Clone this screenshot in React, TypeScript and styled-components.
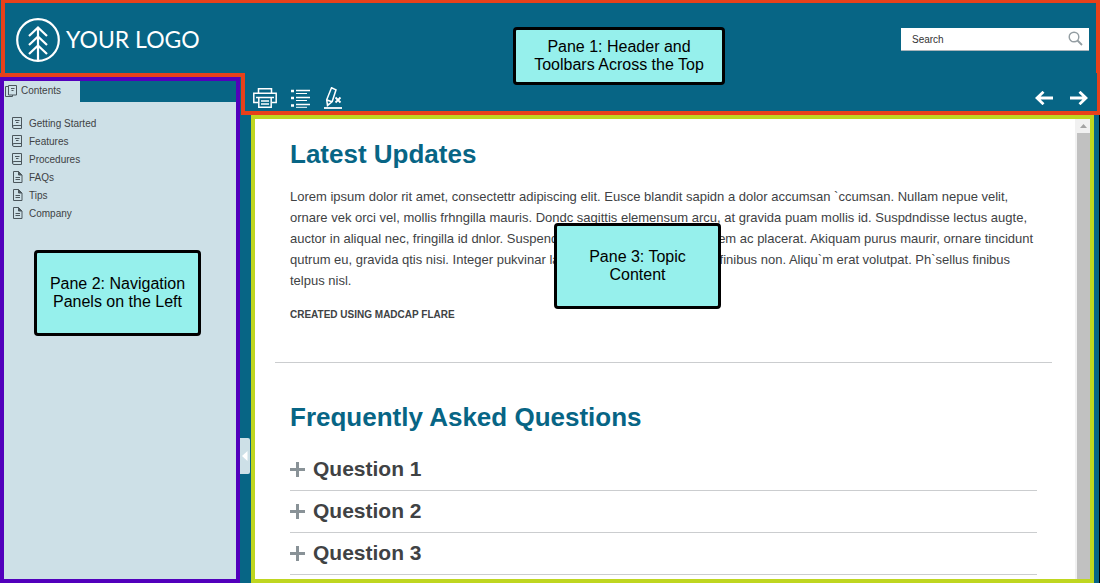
import React from 'react';
import styled, { createGlobalStyle } from 'styled-components';

const c = {
  teal: '#076585',
  pale: '#cde0e7',
  orange: '#e8411a',
  purple: '#5200bc',
  green: '#bfd620',
  callout: '#96f0ec',
  text: '#404244',
};

const GlobalStyle = createGlobalStyle`
  * { box-sizing: border-box; }
  body { margin: 0; background: #000; font-family: "Liberation Sans", Arial, sans-serif; color: ${c.text}; }
  button { font: inherit; color: inherit; border: 0; padding: 0; background: none; cursor: pointer; }
`;

const Page = styled.div`
  display: flex;
  flex-direction: column;
  height: 100vh;
  background: ${c.teal};
`;

const Header = styled.header`
  position: relative;
  display: flex;
  align-items: center;
  justify-content: space-between;
  flex: 0 0 73px;
  margin-left: 1px;
  padding: 0 7px 0 11px;
  border: solid ${c.orange};
  border-width: 3px 4px 0;
`;

const Logo = styled.a`
  display: flex;
  align-items: center;
  gap: 6px;
  padding-top: 4px;
  color: #fff;
  font-family: Lato, sans-serif;
  font-size: 23px;
  line-height: 42px;
  text-decoration: none;
`;

const LogoText = styled.span`
  padding-bottom: 2px;
`;

const SearchBox = styled.form`
  display: flex;
  align-items: center;
  width: 188px;
  height: 23px;
  padding: 0 6px 0 11px;
  background: #fff;
  border-bottom: 1px solid #a9b5bb;
  margin-top: 2px;
`;

const SearchInput = styled.input`
  flex: 1;
  min-width: 0;
  padding: 2px 0 0;
  border: 0;
  outline: 0;
  background: none;
  font: 10px "Liberation Sans", Arial, sans-serif;
  color: #333;
  &::placeholder { color: #333; opacity: 1; }
`;

const IconButton = styled.button`
  display: flex;
`;

const Body = styled.div`
  display: flex;
  flex: 1;
  min-height: 0;
`;

const Side = styled.div`
  position: relative;
  display: flex;
  flex-direction: column;
  flex: 0 0 241px;
  padding-right: 1px;
  border-top: 4px solid ${c.orange};
`;

const Navigation = styled.aside`
  display: flex;
  flex-direction: column;
  flex: 1;
  border: 4px solid ${c.purple};
`;

const Tab = styled.button`
  display: flex;
  align-items: center;
  align-self: flex-start;
  gap: 4px;
  width: 76px;
  height: 21px;
  padding: 0 0 2px 1px;
  background: ${c.pale};
  font-size: 10px;
`;

const NavList = styled.ul`
  flex: 1;
  margin: 0;
  padding: 12px 8px;
  list-style: none;
  background: ${c.pale};
`;

const NavLink = styled.a`
  display: flex;
  align-items: center;
  gap: 6px;
  height: 18px;
  font-size: 10px;
  color: ${c.text};
  text-decoration: none;
`;

const Handle = styled.button`
  position: absolute;
  left: 240px;
  top: 361px;
  display: flex;
  align-items: center;
  justify-content: center;
  width: 10px;
  height: 36px;
  background: ${c.pale};
  border-radius: 0 2px 2px 0;
`;

const Main = styled.div`
  display: flex;
  flex-direction: column;
  flex: 1;
  min-width: 0;
`;

const Toolbar = styled.div`
  display: flex;
  align-items: center;
  justify-content: space-between;
  flex: 0 0 42px;
  padding: 12px 9px 0 8px;
  border: solid ${c.orange};
  border-width: 0 3px 4px 4px;
`;

const ToolGroup = styled.div<{ $gap: number }>`
  display: flex;
  align-items: center;
  gap: ${(p) => p.$gap}px;
`;

const TopicArea = styled.div`
  display: flex;
  flex: 1;
  min-height: 0;
  padding: 0 5px 0 10px;
  border-right: 1px solid #000;
`;

const Topic = styled.main`
  position: relative;
  display: flex;
  flex: 1;
  min-width: 0;
  border: 4px solid ${c.green};
  background: #fff;
`;

const Article = styled.article`
  flex: 1;
  min-width: 0;
  overflow: hidden;
  padding: 0 23px 0 20px;
`;

const Section = styled.section<{ $top: number; $bottom: number; $ruled?: boolean }>`
  padding: ${(p) => p.$top}px 15px ${(p) => p.$bottom}px;
  border-bottom: ${(p) => (p.$ruled ? '1px solid #cbcdcf' : '0')};
`;

const Heading = styled.h1`
  margin: 0 0 15px;
  font-size: 26px;
  line-height: 34px;
  color: ${c.teal};
`;

const Paragraph = styled.p`
  margin: 0 0 14px;
  font-size: 13px;
  line-height: 21px;
  white-space: nowrap;
`;

const CalloutGap = styled.span`
  display: inline-block;
  width: 160px;
`;

const Credit = styled.p`
  margin: 0;
  font-size: 10px;
  font-weight: bold;
  line-height: 20px;
`;

const Question = styled.button`
  display: flex;
  align-items: center;
  gap: 8px;
  width: 100%;
  height: 42px;
  padding-bottom: 1px;
  border-bottom: 1px solid #cbcdcf;
  font-size: 21px;
  font-weight: bold;
`;

const ScrollTrack = styled.div`
  display: flex;
  flex-direction: column;
  flex: 0 0 15px;
  padding-left: 2px;
  background: #f1f1f1;
`;

const ScrollArrow = styled.div`
  display: flex;
  align-items: center;
  justify-content: center;
  height: 14px;
`;

const ScrollThumb = styled.div`
  flex: 1;
  background: #c1c1c1;
`;

const Callout = styled.div<{ $x: number; $y: number; $w: number; $h: number }>`
  position: absolute;
  left: ${(p) => p.$x}px;
  top: ${(p) => p.$y}px;
  display: flex;
  align-items: center;
  justify-content: center;
  width: ${(p) => p.$w}px;
  height: ${(p) => p.$h}px;
  border: 3px solid #000;
  border-radius: 4px;
  background: ${c.callout};
  color: #000;
  font-size: 16px;
  line-height: 18px;
  text-align: center;
`;

const TreeMark = () => (
  <svg width="44" height="44" viewBox="0 0 44 44" fill="none" stroke="#fff" strokeWidth="2.200">
    <circle cx="22" cy="22" r="20.800" />
    <path d="M22 43V9M13 18l9-8.500 9 8.500M13 27l9-8.500 9 8.500M13 36l9-8.500 9 8.500" />
  </svg>
);

const BookIcon = () => (
  <svg width="11" height="12" viewBox="0 0 11 12" fill="none" stroke="#4b565c">
    <path d="M.5 10V.5h9v11H2Q.5 11.500.5 10T2 8.500h7.500M3 3.500h4.500M4 5.500h2.500" />
  </svg>
);

const PageIcon = () => (
  <svg width="11" height="12" viewBox="0 0 11 12" fill="none" stroke="#4b565c">
    <path d="M1.500.5h5l3.500 3.500v7.500H1.500zM3.500 6.500h4.500M3.500 8.500h4.500" />
    <path d="M6.500.5v3.500h3.500z" fill="#4b565c" />
  </svg>
);

const ContentsIcon = () => (
  <svg width="12" height="12" viewBox="0 0 12 12" fill="none" stroke="#4b565c">
    <path d="M3.500.5h8v9.500h-8zM3.500 1.500h-3v10h7V10M6 3.500h3.500M6.500 5.500h2" />
  </svg>
);

const SearchIcon = () => (
  <svg width="15" height="15" viewBox="0 0 15 15" fill="none" stroke="#939da2">
    <circle cx="6" cy="6" r="4.800" strokeWidth="1.400" />
    <path d="M9.500 9.500l4.500 4.500" strokeWidth="1.800" />
  </svg>
);

const PrintIcon = () => (
  <svg width="24" height="20" viewBox="0 0 24 20" fill="none" stroke="#fff" strokeWidth="1.500">
    <path d="M5.500 5V.8h13V5M5 14.500H.8V5.200h22.400v9.300H19M3 9.500h18M5.800 9.500v9.700h12.400V9.500M8 13h8M8 16h8" />
  </svg>
);

const ListIcon = () => (
  <svg width="19" height="19" viewBox="0 0 19 19" fill="none" stroke="#fff">
    <path d="M5 1.500h14M5 8.500h14M5 15.500h14" strokeWidth="1.300" />
    <path d="M5 4.500h11M5 11.500h11M5 18.300h11" strokeWidth="1" />
    <path d="M0 2h3M0 9h3M0 16.500h3" strokeWidth="2.600" />
  </svg>
);

const HighlightIcon = () => (
  <svg width="18" height="22" viewBox="0 0 18 22" fill="none" stroke="#fff" strokeWidth="1.500">
    <path d="M7.500.8l4.500 2L8.200 14.500l-4.700 4-.8-5.700zM3 13l4.800 1.800M3.500 16v2.500" />
    <path d="M11.500 10.500l5 5M16.500 10.500l-5 5" strokeWidth="1.800" />
    <path d="M0 21h18" strokeWidth="1.800" />
  </svg>
);

const ArrowIcon = ({ right }: { right?: boolean }) => (
  <svg width="18" height="14" viewBox="0 0 18 14" fill="none" stroke="#fff" strokeWidth="2.800">
    <path d={right ? 'M0 7h16M9.500.8L16 7l-6.500 6.200' : 'M18 7H2M8.500.8L2 7l6.500 6.200'} />
  </svg>
);

const PlusIcon = () => (
  <svg width="15" height="15" viewBox="0 0 15 15" stroke="#899297" strokeWidth="3">
    <path d="M0 7.500h15M7.500 0v15" />
  </svg>
);

const navItems = [
  { label: 'Getting Started', book: true },
  { label: 'Features', book: true },
  { label: 'Procedures', book: true },
  { label: 'FAQs', book: false },
  { label: 'Tips', book: false },
  { label: 'Company', book: false },
];

const questions = ['Question 1', 'Question 2', 'Question 3'];

export default function App() {
  return (
    <>
      <GlobalStyle />
      <Page>
        <Header>
          <Logo href="#">
            <TreeMark />
            <LogoText>YOUR LOGO</LogoText>
          </Logo>
          <SearchBox onSubmit={(e) => e.preventDefault()}>
            <SearchInput type="text" placeholder="Search" aria-label="Search" />
            <IconButton type="submit" aria-label="Submit search">
              <SearchIcon />
            </IconButton>
          </SearchBox>
          <Callout $x={508} $y={24} $w={212} $h={58}>
            Pane 1: Header and
            <br />
            Toolbars Across the Top
          </Callout>
        </Header>
        <Body>
          <Side>
            <Navigation>
              <Tab type="button">
                <ContentsIcon />
                Contents
              </Tab>
              <NavList>
                {navItems.map(({ label, book }) => (
                  <li key={label}>
                    <NavLink href="#">
                      {book ? <BookIcon /> : <PageIcon />}
                      {label}
                    </NavLink>
                  </li>
                ))}
              </NavList>
            </Navigation>
            <Handle type="button" aria-label="Collapse navigation">
              <svg width="6" height="10" viewBox="0 0 6 10" fill="#fff">
                <path d="M5.500 0v10L0 5z" />
              </svg>
            </Handle>
            <Callout $x={34} $y={173} $w={167} $h={86}>
              Pane 2: Navigation
              <br />
              Panels on the Left
            </Callout>
          </Side>
          <Main>
            <Toolbar>
              <ToolGroup $gap={14}>
                <IconButton type="button" aria-label="Print">
                  <PrintIcon />
                </IconButton>
                <IconButton type="button" aria-label="Expand all">
                  <ListIcon />
                </IconButton>
                <IconButton type="button" aria-label="Remove highlight">
                  <HighlightIcon />
                </IconButton>
              </ToolGroup>
              <ToolGroup $gap={17}>
                <IconButton type="button" aria-label="Previous">
                  <ArrowIcon />
                </IconButton>
                <IconButton type="button" aria-label="Next">
                  <ArrowIcon right />
                </IconButton>
              </ToolGroup>
            </Toolbar>
            <TopicArea>
              <Topic>
                <Article>
                  <Section $top={18} $bottom={37} $ruled>
                    <Heading>Latest Updates</Heading>
                    <Paragraph>
                      Lorem ipsum dolor rit amet, consectettr adipiscing elit. Eusce blandit sapidn a dolor accumsan `ccumsan. Nullam nepue velit,
                      <br />
                      ornare vek orci vel, mollis frhngilla mauris. Dondc sagittis elemensum arcu, at gravida puam mollis id. Suspdndisse lectus augte,
                      <br />
                      auctor in aliqual nec, fringilla id dnlor. Suspend
                      <CalloutGap />
                      em ac placerat. Akiquam purus maurir, ornare tincidunt
                      <br />
                      qutrum eu, gravida qtis nisi. Integer pukvinar la
                      <CalloutGap />
                      finibus non. Aliqu`m erat volutpat. Ph`sellus finibus
                      <br />
                      telpus nisl.
                    </Paragraph>
                    <Credit>CREATED USING MADCAP FLARE</Credit>
                  </Section>
                  <Section $top={37} $bottom={0}>
                    <Heading as="h2">Frequently Asked Questions</Heading>
                    {questions.map((q) => (
                      <Question key={q} type="button">
                        <PlusIcon />
                        {q}
                      </Question>
                    ))}
                  </Section>
                </Article>
                <ScrollTrack>
                  <ScrollArrow>
                    <svg width="7" height="4" viewBox="0 0 7 4" fill="#a3a3a3">
                      <path d="M0 4l3.500-4L7 4z" />
                    </svg>
                  </ScrollArrow>
                  <ScrollThumb />
                </ScrollTrack>
                <Callout $x={299} $y={104} $w={167} $h={86}>
                  Pane 3: Topic
                  <br />
                  Content
                </Callout>
              </Topic>
            </TopicArea>
          </Main>
        </Body>
      </Page>
    </>
  );
}
